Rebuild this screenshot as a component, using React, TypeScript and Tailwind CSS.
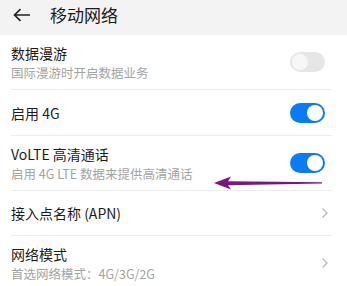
import React from 'react';

const font = { fontFamily: '"Noto Sans CJK SC", "Noto Sans", sans-serif' };

function Toggle({ on }: { on: boolean }) {
  return (
    <div
      className={`mr-[7px] flex h-[20px] w-[35px] items-center rounded-full px-[2px] ${
        on ? 'justify-end bg-[#0a7cf2]' : 'justify-start bg-[#e6e6e6]'
      }`}
    >
      <div className={`h-[16px] w-[16px] rounded-full ${on ? 'bg-white' : 'bg-[#f7f7f7]'}`} />
    </div>
  );
}

function Chevron() {
  return (
    <svg className="mr-[3px]" width="8" height="12" viewBox="0 0 8 12" fill="none">
      <path d="M1.5 1.5 L6 6 L1.5 10.5" stroke="#b8b8b8" strokeWidth="1.3" />
    </svg>
  );
}

function Row({
  title,
  sub,
  right,
  h,
}: {
  title: string;
  sub?: string;
  right: React.ReactNode;
  h: string;
}) {
  return (
    <div className={`ml-[11px] mr-[15px] flex items-center justify-between border-b border-[#ececec] ${h}`}>
      <div className="flex flex-col">
        <div className="text-[14px] leading-[20px] text-[#1c1c1c]">{title}</div>
        {sub && <div className="mt-[1px] text-[12.5px] leading-[18px] text-[#a3a3a3]">{sub}</div>}
      </div>
      {right}
    </div>
  );
}

export default function App() {
  return (
    <div className="relative h-[286px] w-[347px] overflow-hidden bg-white" style={font}>
      {/* Header */}
      <header className="flex h-[35px] items-center bg-[#f3f3f3] pb-[6px]">
        <svg className="ml-[13px]" width="18" height="14" viewBox="0 0 18 14" fill="none">
          <path d="M17 7 H2 M7.5 1.2 L1.5 7 L7.5 12.8" stroke="#222" strokeWidth="1.6" />
        </svg>
        <h1 className="ml-[19px] text-[17px] font-normal text-[#1a1a1a]">移动网络</h1>
      </header>
      <Row title="数据漫游" sub="国际漫游时开启数据业务" right={<Toggle on={false} />} h="h-[55px]" />
      <Row title="启用 4G" right={<Toggle on />} h="h-[46px]" />
      <Row title="VoLTE 高清通话" sub="启用 4G LTE 数据来提供高清通话" right={<Toggle on />} h="h-[55px]" />
      <Row title="接入点名称 (APN)" right={<Chevron />} h="h-[45px]" />
      <Row title="网络模式" sub="首选网络模式：4G/3G/2G" right={<Chevron />} h="h-[55px]" />
      {/* annotation arrow */}
      <svg className="absolute left-[214px] top-[176px]" width="110" height="14" viewBox="0 0 110 14">
        <path d="M0 7 L17 0.5 L14 5.2 L108 6.2 L108 7.6 L14 9.3 L17 13.5 Z" fill="#7b1585" />
      </svg>
    </div>
  );
}
